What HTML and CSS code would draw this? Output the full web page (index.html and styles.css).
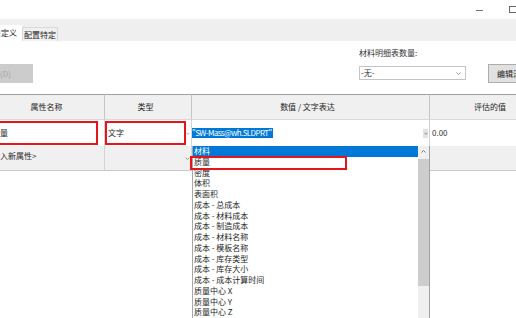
FILE: index.html
```html
<!DOCTYPE html>
<html lang="zh">
<head>
<meta charset="utf-8">
<link rel="stylesheet" href="styles.css">
</head>
<body>
<div class="titlebar">
  <span class="win-min"></span>
  <span class="win-max"></span>
</div>
<div class="tabstrip">
  <div class="tab tab-active">自定义</div>
  <div class="tab">配置特定</div>
</div>
<div class="toolbar">
  <div class="btn btn-del">删除(D)</div>
  <div class="bom">
    <div class="bom-label">材料明细表数量:</div>
    <div class="select">
      <span>-无-</span>
      <svg class="chev" width="5" height="3" viewBox="0 0 5 3"><path d="M0.5 0.5 L2.5 2.5 L4.5 0.5" fill="none" stroke="#777" stroke-width="0.8"/></svg>
    </div>
  </div>
  <div class="btn btn-edit">编辑清单...</div>
</div>
<div class="grid">
  <div class="hd hd1">属性名称</div>
  <div class="hd hd2">类型</div>
  <div class="hd hd3">数值 / 文字表达</div>
  <div class="hd hd4">评估的值</div>

  <div class="cell r1"><div class="mark mark-name">质量</div></div>
  <div class="cell r1 c2"><div class="mark mark-type">文字</div>
    <svg class="chev" width="5" height="3" viewBox="0 0 5 3"><path d="M0.5 0.5 L2.5 2.5 L4.5 0.5" fill="none" stroke="#888" stroke-width="0.8"/></svg>
  </div>
  <div class="cell r1 c3">
    <span class="sel">"SW-Mass@wh.SLDPRT"</span>
    <span class="mini-btn"><svg width="4" height="3" viewBox="0 0 4 3"><path d="M0.4 0.7 L2 2.3 L3.6 0.7" fill="none" stroke="#666" stroke-width="0.7"/></svg></span>
    <div class="list">
      <div class="items">
        <div class="item active">材料</div>
        <div class="item">质量</div>
        <div class="item">密度</div>
        <div class="item">体积</div>
        <div class="item">表面积</div>
        <div class="item">成本 - 总成本</div>
        <div class="item">成本 - 材料成本</div>
        <div class="item">成本 - 制造成本</div>
        <div class="item">成本 - 材料名称</div>
        <div class="item">成本 - 模板名称</div>
        <div class="item">成本 - 库存类型</div>
        <div class="item">成本 - 库存大小</div>
        <div class="item">成本 - 成本计算时间</div>
        <div class="item">质量中心 X</div>
        <div class="item">质量中心 Y</div>
        <div class="item">质量中心 Z</div>
      </div>
      <div class="scrollbar">
        <div class="sb-up"><svg width="5" height="3" viewBox="0 0 5 3"><path d="M0.5 2.5 L2.5 0.5 L4.5 2.5" fill="none" stroke="#606060" stroke-width="0.8"/></svg></div>
        <div class="sb-thumb"></div>
      </div>
    </div>
    <div class="mark-item"></div>
  </div>
  <div class="cell r1 c4">0.00</div>

  <div class="cell r2"><span class="add">插入新属性&gt;</span></div>
  <div class="cell r2 c2">
    <svg class="chev" width="5" height="3" viewBox="0 0 5 3"><path d="M0.5 0.5 L2.5 2.5 L4.5 0.5" fill="none" stroke="#888" stroke-width="0.8"/></svg>
  </div>
  <div class="cell r2 c3"></div>
  <div class="cell r2 c4"></div>
</div>
</body>
</html>
```

FILE: styles.css
```css
* { box-sizing: border-box; }
html, body { margin: 0; padding: 0; }
body {
  width: 516px;
  height: 318px;
  overflow: hidden;
  background: #fff;
  font-family: "Noto Sans CJK SC", "Noto Sans", sans-serif;
  font-size: 8px;
  line-height: 10px;
  color: #1e1e1e;
}

.titlebar {
  height: 19px;
  display: flex;
  align-items: center;
  justify-content: flex-end;
}
.win-min {
  width: 7px;
  height: 1px;
  background: #777;
  margin-right: 26px;
  margin-top: 1px;
}
.win-max {
  width: 8px;
  height: 7px;
  border: 1px solid #666;
  margin-right: -1px;
  margin-top: -1px;
}

.tabstrip {
  height: 22px;
  background: #efefef;
  display: flex;
  align-items: flex-end;
}
.tab {
  height: 14px;
  line-height: 13px;
  padding: 0 1px;
  background: #f0f0f0;
  border: 1px solid #d9d9d9;
  border-bottom: none;
  color: #1e1e1e;
}
.tab-active {
  height: 16px;
  line-height: 15px;
  background: #fff;
  margin-left: -7px;
  padding: 0 5px 0 0;
  border: none;
}

.toolbar {
  height: 53px;
  display: flex;
  align-items: flex-start;
}
.btn {
  height: 19px;
  line-height: 19px;
  white-space: nowrap;
  overflow: hidden;
}
.btn-del {
  margin-top: 23px;
  margin-left: -40px;
  width: 73px;
  padding-left: 24px;
  background: #cccccc;
  color: #a3a3a3;
}
.bom {
  margin-left: auto;
  width: 107px;
  margin-right: 22px;
  display: flex;
  flex-direction: column;
}
.bom-label {
  margin-top: 7px;
  color: #333;
}
.select {
  margin-top: 8px;
  height: 14px;
  border: 1px solid #c4c4c4;
  display: flex;
  align-items: center;
  justify-content: space-between;
  padding: 0 4px 0 1px;
  color: #333;
}
.btn-edit {
  margin-top: 23px;
  width: 40px;
  margin-right: -12px;
  background: #e1e1e1;
  border: 1px solid #adadad;
  padding-left: 8px;
  line-height: 17px;
  color: #222;
}

.grid {
  display: grid;
  grid-template-columns: 105px 87px 238px 86px;
  grid-template-rows: 26px 26px 25px;
}
.hd {
  background: #f0f0f0;
  border-top: 1px solid #a0a0a0;
  border-right: 1px solid #c6c6c6;
  border-bottom: 1px solid #dadada;
  display: flex;
  align-items: center;
  justify-content: center;
  color: #1e1e1e;
}
.hd1 { padding-right: 11px; }
.hd2 { padding-right: 5px; }
.hd3 { padding-right: 6px; }
.hd4 { justify-content: flex-start; padding-left: 44px; border-right: none; }

.cell {
  border-right: 1px solid #d4d4d4;
  display: flex;
  align-items: center;
}
.r1 { background: #fff; }
.r2 { background: #f0f0f0; border-bottom: 1px solid #c8c8c8; }
.c4 { border-right: none; }

.mark {
  height: 24px;
  border: 2px solid #e8141c;
  display: flex;
  align-items: center;
  padding-left: 1px;
  flex-shrink: 0;
}
.mark-name {
  width: 109px;
  margin-left: -11px;
}
.mark-type {
  width: 81px;
}
.c2 { justify-content: space-between; padding-right: 1px; }
.r2.c2 { justify-content: flex-end; align-items: flex-start; padding-top: 11px; }
.r1.c2 .chev { margin-top: 1px; }

.c3.r1 {
  position: relative;
  padding-right: 1px;
}
.sel {
  background: #0078d7;
  color: #fff;
  line-height: 10px;
  height: 10px;
  padding: 0 1px 0 0;
  margin-top: -1px;
  white-space: nowrap;
  letter-spacing: -0.6px;
}
.mini-btn {
  margin-left: auto;
  width: 5px;
  height: 9px;
  background: #e3e3e3;
  display: flex;
  align-items: center;
  justify-content: center;
  margin-top: 1px;
}
.r1.c4 {
  padding-left: 2px;
  color: #333;
}

.add {
  margin-left: -8px;
  margin-top: -4px;
}

.list {
  position: absolute;
  left: 0;
  top: 100%;
  width: 238px;
  height: 172px;
  overflow: hidden;
  background: #fff;
  border-left: 1px solid #a8a8a8;
  border-right: 1px solid #a0a0a0;
  display: flex;
  z-index: 2;
}
.items {
  width: 225px;
}
.item {
  height: 10.75px;
  line-height: 10.75px;
  padding-left: 1px;
  white-space: nowrap;
  color: #1e1e1e;
}
.item.active {
  background: #0078d7;
  color: #fff;
}
.scrollbar {
  flex: 1;
  background: #f0f0f0;
  display: flex;
  flex-direction: column;
  align-items: stretch;
}
.sb-up {
  height: 11px;
  display: flex;
  align-items: center;
  justify-content: center;
}
.sb-thumb {
  margin-top: 2px;
  height: 127px;
  background: #cdcdcd;
}
.mark-item {
  position: absolute;
  left: -2px;
  top: 36px;
  width: 157px;
  height: 14px;
  border: 2px solid #e8141c;
  z-index: 3;
}
```
